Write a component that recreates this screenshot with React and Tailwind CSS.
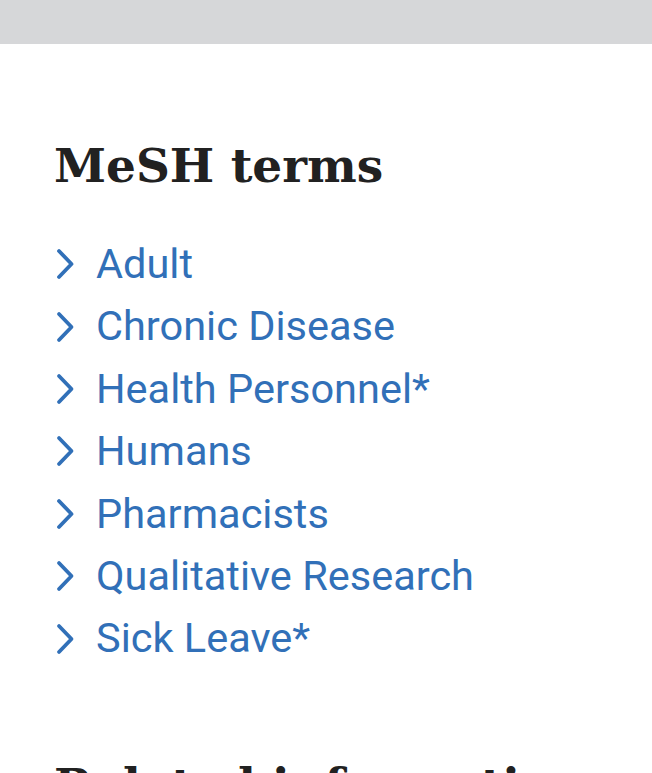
const TERMS = [
  "Adult",
  "Chronic Disease",
  "Health Personnel*",
  "Humans",
  "Pharmacists",
  "Qualitative Research",
  "Sick Leave*",
];

function Chevron() {
  return (
    <svg width="26" height="32" viewBox="0 0 26 32" className="shrink-0">
      <path d="M5 3 L17.5 16 L5 29" fill="none" stroke="#3170b8" strokeWidth="3.8" strokeLinecap="round" strokeLinejoin="round" />
    </svg>
  );
}

export default function App() {
  return (
    <div className="min-h-[773px] bg-white overflow-hidden">
      <div className="h-[44px] bg-[#d6d7d9]" />
      <div className="px-[54px]">
        <h2 className="mt-[86px] text-[47px] leading-[72px] font-bold text-[#212121] font-['DejaVu_Serif',serif]">
          MeSH terms
        </h2>
        <ul className="mt-[31px] font-['Roboto',sans-serif]">
          {TERMS.map((t) => (
            <li key={t} className="flex items-center gap-[16px] h-[62.4px] text-[41.5px] text-[#3170b8]">
              <Chevron />
              <span>{t}</span>
            </li>
          ))}
        </ul>
        <h2 className="mt-[80px] text-[47px] leading-[72px] font-bold text-[#212121] font-['DejaVu_Serif',serif] whitespace-nowrap">
          Related information
        </h2>
      </div>
    </div>
  );
}
